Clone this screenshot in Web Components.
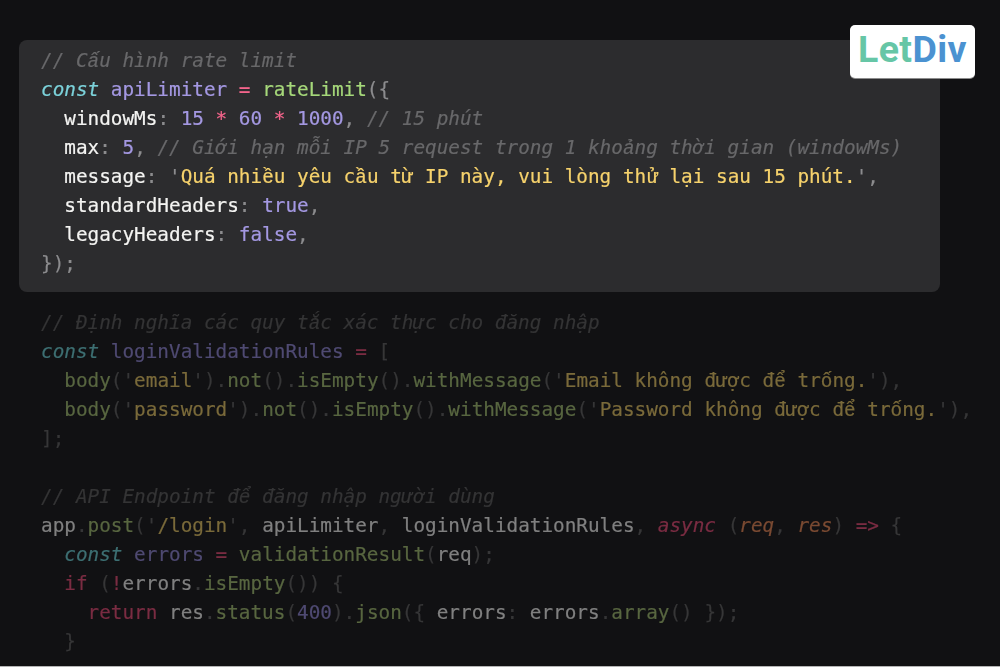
<!DOCTYPE html>
<html>
<head>
<meta charset="utf-8">
<style>
  html, body { margin: 0; height: 100%; background: #111113; overflow: hidden; }
</style>
</head>
<body>
<code-page>
  <code-block focus>
    <code-line><span class="c">// C<vi-ch>ấ</vi-ch>u hình rate limit</span></code-line>
    <code-line><span class="k">const</span> <span class="v">apiLimiter</span> <span class="o">=</span> <span class="f">rateLimit</span><span class="p">({</span></code-line>
    <code-line>  <span class="w">windowMs</span><span class="p">:</span> <span class="n">15</span> <span class="o">*</span> <span class="n">60</span> <span class="o">*</span> <span class="n">1000</span><span class="p">,</span> <span class="c">// 15 phút</span></code-line>
    <code-line>  <span class="w">max</span><span class="p">:</span> <span class="n">5</span><span class="p">,</span> <span class="c">// Giới hạn m<vi-ch>ỗ</vi-ch>i IP 5 request trong 1 kho<vi-ch>ả</vi-ch>ng thời gian (windowMs)</span></code-line>
    <code-line>  <span class="w">message</span><span class="p">:</span> <span class="p">'</span><span class="s">Quá nhi<vi-ch>ề</vi-ch>u yêu c<vi-ch>ầ</vi-ch>u từ IP này, vui lòng th<vi-ch>ử</vi-ch> lại sau 15 phút.</span><span class="p">',</span></code-line>
    <code-line>  <span class="w">standardHeaders</span><span class="p">:</span> <span class="n">true</span><span class="p">,</span></code-line>
    <code-line>  <span class="w">legacyHeaders</span><span class="p">:</span> <span class="n">false</span><span class="p">,</span></code-line>
    <code-line><span class="p">});</span></code-line>
  </code-block>
  <code-block>
    <code-line><span class="c">// Định nghĩa các quy t<vi-ch>ắ</vi-ch>c xác thực cho đăng nhập</span></code-line>
    <code-line><span class="k">const</span> <span class="v">loginValidationRules</span> <span class="o">=</span> <span class="p">[</span></code-line>
    <code-line>  <span class="f">body</span><span class="p">('</span><span class="s">email</span><span class="p">').</span><span class="f">not</span><span class="p">().</span><span class="f">isEmpty</span><span class="p">().</span><span class="f">withMessage</span><span class="p">('</span><span class="s">Email không được đ<vi-ch>ể</vi-ch> tr<vi-ch>ố</vi-ch>ng.</span><span class="p">'),</span></code-line>
    <code-line>  <span class="f">body</span><span class="p">('</span><span class="s">password</span><span class="p">').</span><span class="f">not</span><span class="p">().</span><span class="f">isEmpty</span><span class="p">().</span><span class="f">withMessage</span><span class="p">('</span><span class="s">Password không được đ<vi-ch>ể</vi-ch> tr<vi-ch>ố</vi-ch>ng.</span><span class="p">'),</span></code-line>
    <code-line><span class="p">];</span></code-line>
    <code-line></code-line>
    <code-line><span class="c">// API Endpoint đ<vi-ch>ể</vi-ch> đăng nhập người dùng</span></code-line>
    <code-line><span class="w">app</span><span class="p">.</span><span class="f">post</span><span class="p">('</span><span class="s">/login</span><span class="p">',</span> <span class="w">apiLimiter</span><span class="p">,</span> <span class="w">loginValidationRules</span><span class="p">,</span> <span class="a">async</span> <span class="p">(</span><span class="r">req</span><span class="p">,</span> <span class="r">res</span><span class="p">)</span> <span class="o">=&gt;</span> <span class="p">{</span></code-line>
    <code-line>  <span class="k">const</span> <span class="v">errors</span> <span class="o">=</span> <span class="f">validationResult</span><span class="p">(</span><span class="w">req</span><span class="p">);</span></code-line>
    <code-line>  <span class="o">if</span> <span class="p">(</span><span class="o">!</span><span class="w">errors</span><span class="p">.</span><span class="f">isEmpty</span><span class="p">())</span> <span class="p">{</span></code-line>
    <code-line>    <span class="o">return</span> <span class="w">res</span><span class="p">.</span><span class="f">status</span><span class="p">(</span><span class="n">400</span><span class="p">).</span><span class="f">json</span><span class="p">({</span> <span class="w">errors</span><span class="p">:</span> <span class="w">errors</span><span class="p">.</span><span class="f">array</span><span class="p">()</span> <span class="p">});</span></code-line>
    <code-line>  <span class="p">}</span></code-line>
  </code-block>
  <letdiv-badge></letdiv-badge>
</code-page>

<script>
const tpl_page = document.createElement('template');
tpl_page.innerHTML = `<style>
    :host{
      display:block;
      position:relative;
      height:667px;
      overflow:hidden;
      padding-top:40px;
      box-sizing:border-box;
      background:#111113;
      border-bottom:1px solid #b4b4b4;
      font-family:"DejaVu Sans Mono","Liberation Mono",monospace;
      font-size:19.33px;
    }
  </style><slot></slot>`;

const tpl_block = document.createElement('template');
tpl_block.innerHTML = `<style>
    :host{
      display:block;
      margin:15.5px 0 0 41px;
      --c:#343435;
      --k:#3d6f72;
      --v:#4f4a72;
      --o:#7a2c42;
      --f:#586640;
      --p:#363637;
      --w:#808080;
      --n:#4f4a72;
      --s:#7a6a3a;
      --r:#7a4a32;
    }
    :host([focus]){
      margin:0 60px 0 19px;
      padding:5.5px 22px 14.5px;
      background:#2c2c2e;
      border-radius:8px;
      --c:#68686a;
      --k:#7cd2da;
      --v:#a498e2;
      --o:#f4658c;
      --f:#a6d87a;
      --p:#8c8c8e;
      --w:#f4f4f2;
      --n:#a498e2;
      --s:#f6d26c;
      --r:#fc9867;
    }
  </style><slot></slot>`;

const tpl_line = document.createElement('template');
tpl_line.innerHTML = `<style>
    :host{
      display:block;
      height:29.05px;
      line-height:29.05px;
      white-space:pre;
      -webkit-text-stroke:.2px;
      filter:blur(.4px);
    }
    ::slotted(.c){color:var(--c);font-style:italic}
    ::slotted(.k){color:var(--k);font-style:italic}
    ::slotted(.v){color:var(--v)}
    ::slotted(.o){color:var(--o)}
    ::slotted(.f){color:var(--f)}
    ::slotted(.p){color:var(--p)}
    ::slotted(.w){color:var(--w)}
    ::slotted(.n){color:var(--n)}
    ::slotted(.s){color:var(--s)}
    ::slotted(.a){color:var(--o);font-style:italic}
    ::slotted(.r){color:var(--r);font-style:italic}
  </style><slot></slot>`;

const tpl_ch = document.createElement('template');
tpl_ch.innerHTML = `<style>
    :host{
      display:inline;
      font-family:"Liberation Mono",monospace;
      letter-spacing:.04px;
    }
  </style><slot></slot>`;

const tpl_badge = document.createElement('template');
tpl_badge.innerHTML = `<style>
    :host{
      position:absolute;
      top:25px;
      left:850px;
      width:125px;
      height:53px;
      padding-bottom:3px;
      box-sizing:border-box;
      display:flex;
      align-items:center;
      justify-content:center;
      background:#fff;
      border-radius:5px;
      box-shadow:0 1px 0 #8c8c8c;
      font-family:Roboto,"Liberation Sans",sans-serif;
      font-size:37.5px;
      font-weight:700;
      letter-spacing:.4px;
      line-height:1;
    }
    .let{color:#66c6a6}
    .div{color:#4b92d1}
  </style><span class="let">Let</span><span class="div">Div</span>`;

class CodePage extends HTMLElement {
  constructor() {
    super();
    this.attachShadow({ mode: 'open' });
    this.shadowRoot.appendChild(tpl_page.content.cloneNode(true));
  }
}
class CodeBlock extends HTMLElement {
  constructor() {
    super();
    this.attachShadow({ mode: 'open' });
    this.shadowRoot.appendChild(tpl_block.content.cloneNode(true));
  }
}
class CodeLine extends HTMLElement {
  constructor() {
    super();
    this.attachShadow({ mode: 'open' });
    this.shadowRoot.appendChild(tpl_line.content.cloneNode(true));
  }
}
class ViCh extends HTMLElement {
  constructor() {
    super();
    this.attachShadow({ mode: 'open' });
    this.shadowRoot.appendChild(tpl_ch.content.cloneNode(true));
  }
}
class LetdivBadge extends HTMLElement {
  constructor() {
    super();
    this.attachShadow({ mode: 'open' });
    this.shadowRoot.appendChild(tpl_badge.content.cloneNode(true));
  }
}

customElements.define('code-page', CodePage);
customElements.define('code-block', CodeBlock);
customElements.define('code-line', CodeLine);
customElements.define('vi-ch', ViCh);
customElements.define('letdiv-badge', LetdivBadge);
</script>
</body>
</html>
